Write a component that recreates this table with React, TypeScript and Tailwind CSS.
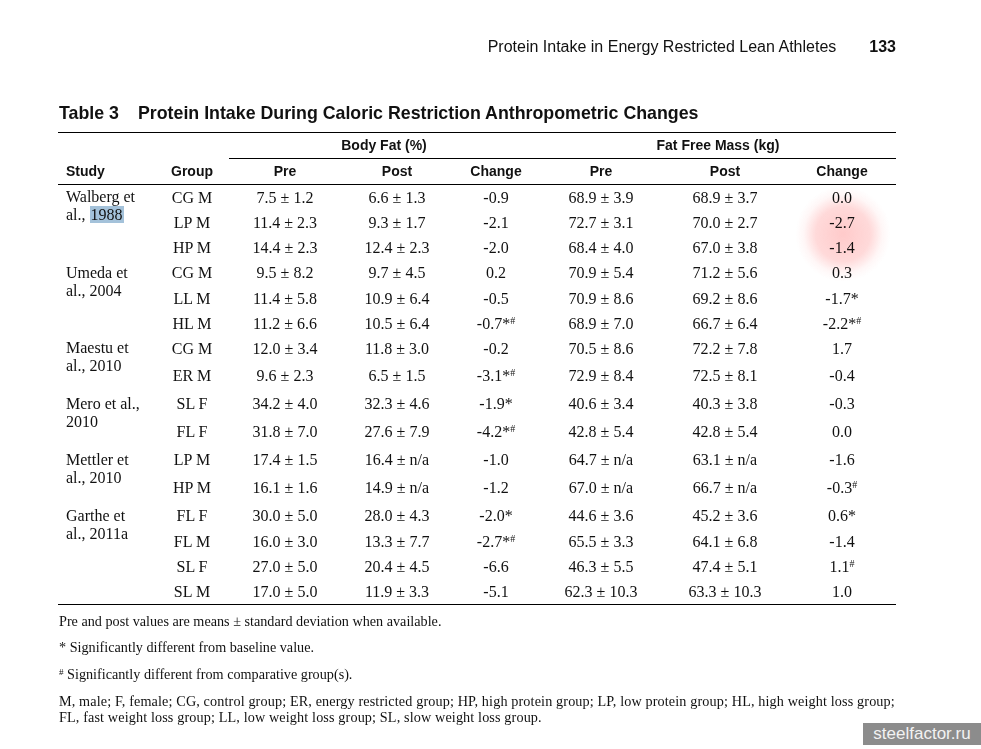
import type { ReactNode } from "react";

type Row = {
  group: string;
  bfPre: string;
  bfPost: string;
  bfChange: ReactNode;
  ffmPre: string;
  ffmPost: string;
  ffmChange: ReactNode;
};

type Study = { name: [string, string]; pad: string; rows: Row[]; heights: string[] };

const mark = (v: string, star: boolean, hash: boolean) => (
  <>
    {v}
    {star && "*"}
    {hash && <sup className="text-[10px]">#</sup>}
  </>
);

const studies: Study[] = [
  {
    name: ["Walberg et", "al., 1988"],
    pad: "pt-[3px]",
    heights: ["h-[25px]", "h-[25px]", "h-[25px]"],
    rows: [
      { group: "CG M", bfPre: "7.5 ± 1.2", bfPost: "6.6 ± 1.3", bfChange: "-0.9", ffmPre: "68.9 ± 3.9", ffmPost: "68.9 ± 3.7", ffmChange: "0.0" },
      { group: "LP M", bfPre: "11.4 ± 2.3", bfPost: "9.3 ± 1.7", bfChange: "-2.1", ffmPre: "72.7 ± 3.1", ffmPost: "70.0 ± 2.7", ffmChange: "-2.7" },
      { group: "HP M", bfPre: "14.4 ± 2.3", bfPost: "12.4 ± 2.3", bfChange: "-2.0", ffmPre: "68.4 ± 4.0", ffmPost: "67.0 ± 3.8", ffmChange: "-1.4" },
    ],
  },
  {
    name: ["Umeda et", "al., 2004"],
    pad: "pt-[4px]",
    heights: ["h-[26px]", "h-[25px]", "h-[25px]"],
    rows: [
      { group: "CG M", bfPre: "9.5 ± 8.2", bfPost: "9.7 ± 4.5", bfChange: "0.2", ffmPre: "70.9 ± 5.4", ffmPost: "71.2 ± 5.6", ffmChange: "0.3" },
      { group: "LL M", bfPre: "11.4 ± 5.8", bfPost: "10.9 ± 6.4", bfChange: "-0.5", ffmPre: "70.9 ± 8.6", ffmPost: "69.2 ± 8.6", ffmChange: mark("-1.7", true, false) },
      { group: "HL M", bfPre: "11.2 ± 6.6", bfPost: "10.5 ± 6.4", bfChange: mark("-0.7", true, true), ffmPre: "68.9 ± 7.0", ffmPost: "66.7 ± 6.4", ffmChange: mark("-2.2", true, true) },
    ],
  },
  {
    name: ["Maestu et", "al., 2010"],
    pad: "pt-[3px]",
    heights: ["h-[26px]", "h-[28px]"],
    rows: [
      { group: "CG M", bfPre: "12.0 ± 3.4", bfPost: "11.8 ± 3.0", bfChange: "-0.2", ffmPre: "70.5 ± 8.6", ffmPost: "72.2 ± 7.8", ffmChange: "1.7" },
      { group: "ER M", bfPre: "9.6 ± 2.3", bfPost: "6.5 ± 1.5", bfChange: mark("-3.1", true, true), ffmPre: "72.9 ± 8.4", ffmPost: "72.5 ± 8.1", ffmChange: "-0.4" },
    ],
  },
  {
    name: ["Mero et al.,", "2010"],
    pad: "pt-[5px]",
    heights: ["h-[28px]", "h-[28px]"],
    rows: [
      { group: "SL F", bfPre: "34.2 ± 4.0", bfPost: "32.3 ± 4.6", bfChange: mark("-1.9", true, false), ffmPre: "40.6 ± 3.4", ffmPost: "40.3 ± 3.8", ffmChange: "-0.3" },
      { group: "FL F", bfPre: "31.8 ± 7.0", bfPost: "27.6 ± 7.9", bfChange: mark("-4.2", true, true), ffmPre: "42.8 ± 5.4", ffmPost: "42.8 ± 5.4", ffmChange: "0.0" },
    ],
  },
  {
    name: ["Mettler et", "al., 2010"],
    pad: "pt-[5px]",
    heights: ["h-[28px]", "h-[28px]"],
    rows: [
      { group: "LP M", bfPre: "17.4 ± 1.5", bfPost: "16.4 ± n/a", bfChange: "-1.0", ffmPre: "64.7 ± n/a", ffmPost: "63.1 ± n/a", ffmChange: "-1.6" },
      { group: "HP M", bfPre: "16.1 ± 1.6", bfPost: "14.9 ± n/a", bfChange: "-1.2", ffmPre: "67.0 ± n/a", ffmPost: "66.7 ± n/a", ffmChange: mark("-0.3", false, true) },
    ],
  },
  {
    name: ["Garthe et", "al., 2011a"],
    pad: "pt-[5px]",
    heights: ["h-[27px]", "h-[25px]", "h-[25px]", "h-[25px]"],
    rows: [
      { group: "FL F", bfPre: "30.0 ± 5.0", bfPost: "28.0 ± 4.3", bfChange: mark("-2.0", true, false), ffmPre: "44.6 ± 3.6", ffmPost: "45.2 ± 3.6", ffmChange: mark("0.6", true, false) },
      { group: "FL M", bfPre: "16.0 ± 3.0", bfPost: "13.3 ± 7.7", bfChange: mark("-2.7", true, true), ffmPre: "65.5 ± 3.3", ffmPost: "64.1 ± 6.8", ffmChange: "-1.4" },
      { group: "SL F", bfPre: "27.0 ± 5.0", bfPost: "20.4 ± 4.5", bfChange: "-6.6", ffmPre: "46.3 ± 5.5", ffmPost: "47.4 ± 5.1", ffmChange: mark("1.1", false, true) },
      { group: "SL M", bfPre: "17.0 ± 5.0", bfPost: "11.9 ± 3.3", bfChange: "-5.1", ffmPre: "62.3 ± 10.3", ffmPost: "63.3 ± 10.3", ffmChange: "1.0" },
    ],
  },
];

const sans = "font-['Liberation_Sans',Arial,sans-serif]";
const serif = "font-['Liberation_Serif','Times_New_Roman',serif]";

function DataRow({ row, height }: { row: Row; height: string }) {
  return (
    <div className={`flex items-center ${height}`}>
      <div className="w-[84px] text-center">{row.group}</div>
      <div className="w-[102px] text-center">{row.bfPre}</div>
      <div className="w-[122px] text-center">{row.bfPost}</div>
      <div className="w-[76px] text-center">{row.bfChange}</div>
      <div className="w-[134px] text-center">{row.ffmPre}</div>
      <div className="w-[114px] text-center">{row.ffmPost}</div>
      <div className="w-[114px] pl-[6px] text-center">{row.ffmChange}</div>
    </div>
  );
}

export default function App() {
  return (
    <div className={`relative h-[749px] w-[981px] overflow-hidden bg-white text-[#111] ${serif}`}>
      {/* running head */}
      <div className={`flex justify-end gap-[33px] pr-[85px] pt-[37px] text-[16px] leading-[20px] ${sans}`}>
        <span>Protein Intake in Energy Restricted Lean Athletes</span>
        <span className="font-bold">133</span>
      </div>

      <div className="ml-[58px] mt-[45px] w-[838px]">
        <h1 className={`flex text-[17.8px] font-bold leading-[22px] ${sans}`}>
          <span className="pl-[1px]">Table 3</span>
          <span className="ml-[19px]">Protein Intake During Caloric Restriction Anthropometric Changes</span>
        </h1>

        <div className="mt-[8px] border-t border-black" />

        {/* column headers */}
        <div className={`text-[14px] font-bold ${sans}`}>
          <div className="flex h-[25px] items-center">
            <div className="w-[176px]" />
            <div className="w-[300px] text-center">Body Fat (%)</div>
            <div className="w-[362px] pl-[6px] text-center">Fat Free Mass (kg)</div>
          </div>
          <div className="ml-[171px] border-t border-black" />
          <div className="flex h-[25px] items-center">
            <div className="w-[92px] pl-[8px]">Study</div>
            <div className="w-[84px] text-center">Group</div>
            <div className="w-[102px] text-center">Pre</div>
            <div className="w-[122px] text-center">Post</div>
            <div className="w-[76px] text-center">Change</div>
            <div className="w-[134px] text-center">Pre</div>
            <div className="w-[114px] text-center">Post</div>
            <div className="w-[114px] pl-[6px] text-center">Change</div>
          </div>
          <div className="border-t border-black" />
        </div>

        {/* body */}
        <div className="relative text-[16px]">
          {studies.map((s) => (
            <div key={s.name[0]} className="flex">
              <div className={`w-[92px] pl-[8px] leading-[18px] ${s.pad}`}>
                <div>{s.name[0]}</div>
                <div>
                  {s.name[1] === "al., 1988" ? (
                    <>
                      al., <span className="bg-[#a4c2da] px-[1px]">1988</span>
                    </>
                  ) : (
                    s.name[1]
                  )}
                </div>
              </div>
              <div className="flex flex-col">
                {s.rows.map((r, i) => (
                  <DataRow key={r.group + i} row={r} height={s.heights[i]} />
                ))}
              </div>
            </div>
          ))}
          <div className="pointer-events-none absolute left-[737px] top-[1px] h-[96px] w-[96px] bg-[radial-gradient(circle,rgba(255,150,150,0.5)_0%,rgba(255,165,165,0.42)_40%,rgba(255,200,200,0.15)_58%,transparent_70%)] mix-blend-multiply" />
        </div>

        <div className="border-t border-black" />

        {/* notes */}
        <div className="pl-[1px] text-[14.2px] leading-[16px]">
          <p className="mt-[8px]">Pre and post values are means ± standard deviation when available.</p>
          <p className="mt-[10px]">* Significantly different from baseline value.</p>
          <p className="mt-[11px]">
            <sup className="text-[9px]">#</sup> Significantly different from comparative group(s).
          </p>
          <p className="mt-[11px] whitespace-nowrap tracking-[0.13px]">
            M, male; F, female; CG, control group; ER, energy restricted group; HP, high protein group; LP, low
            protein group; HL, high weight loss group;
            <br />
            FL, fast weight loss group; LL, low weight loss group; SL, slow weight loss group.
          </p>
        </div>
      </div>

      <div className={`absolute right-0 top-[723px] flex h-[22px] w-[118px] items-center justify-center bg-[#8c8c8c] text-[17px] text-[#f2f2f2] ${sans}`}>
        steelfactor.ru
      </div>
    </div>
  );
}
